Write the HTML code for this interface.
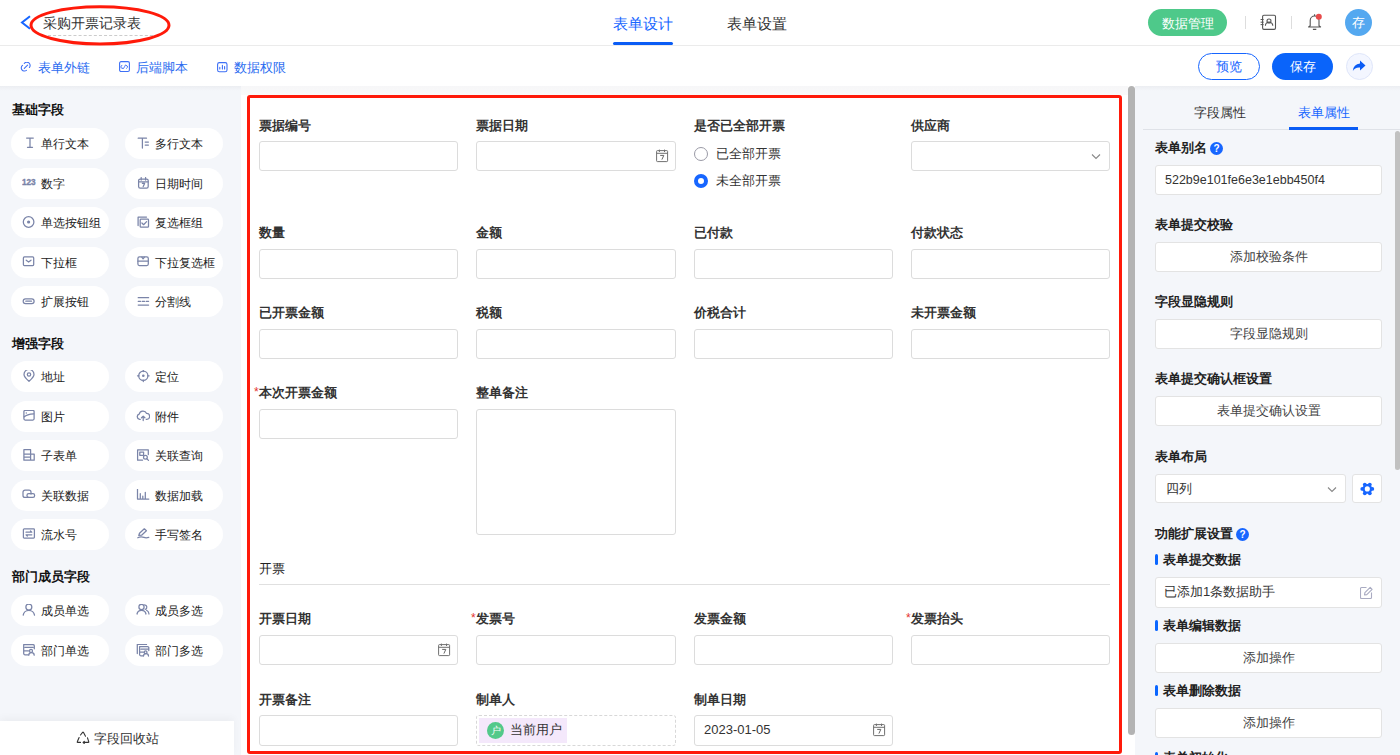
<!DOCTYPE html>
<html><head><meta charset="utf-8">
<style>
*{box-sizing:border-box;margin:0;padding:0}
html,body{width:1400px;height:755px;overflow:hidden;background:#fff;font-family:"Liberation Sans",sans-serif;color:#333}
.abs{position:absolute}
#hdr{position:absolute;left:0;top:0;width:1400px;height:46px;background:#fff;border-bottom:1px solid #ebebeb}
#tb{position:absolute;left:0;top:46px;width:1400px;height:40px;background:#fff}
#left{position:absolute;left:0;top:86px;width:241px;height:669px;background:linear-gradient(#eceef2 0,#f4f6fa 5px)}
#canvas{position:absolute;left:241px;top:86px;width:887px;height:669px;background:#fff}
#right{position:absolute;left:1135px;top:86px;width:265px;height:669px;background:linear-gradient(#eceef2 0,#f4f6fa 5px)}
.sec{position:absolute;left:12px;font-size:13px;font-weight:bold;color:#111}
.pill{position:absolute;width:98px;height:31px;background:#fff;border-radius:16px;font-size:12px;color:#222;line-height:31px}
.pill .ic{position:absolute}
.pill span{position:absolute;left:30px;top:1px}
.lbl{position:absolute;font-size:13px;font-weight:bold;color:#333}
.inp{position:absolute;width:199px;height:30px;border:1px solid #dcdcdc;border-radius:3px;background:#fff}
.rl{position:absolute;left:20px;font-size:13px;font-weight:bold;color:#222}
.rbtn{position:absolute;left:20px;width:227px;height:30px;background:#fff;border:1px solid #e3e3e3;border-radius:3px;font-size:13px;color:#444;text-align:center;line-height:28px}
</style></head><body>
<div id="hdr">
  <svg class="abs" style="left:20px;top:14px" width="12" height="16" viewBox="0 0 12 16"><path d="M10 2.3 L2 8.5 L10 14.7" fill="none" stroke="#1766ff" stroke-width="2"/></svg>
  <div class="abs" style="left:43px;top:14px;font-size:14.3px;color:#333">采购开票记录表</div>
  <div class="abs" style="left:48px;top:35px;width:110px;border-top:1px dashed #ccc"></div>
  <svg class="abs" style="left:29px;top:4px" width="142" height="44"><ellipse cx="71" cy="21.3" rx="69" ry="18.6" fill="none" stroke="#ff1a0a" stroke-width="3"/></svg>
  <div class="abs" style="left:613px;top:15px;font-size:15px;color:#1766ff">表单设计</div>
  <div class="abs" style="left:613px;top:42px;width:60px;height:3px;background:#0a5cf5;border-radius:2px"></div>
  <div class="abs" style="left:727px;top:15px;font-size:15px;color:#333">表单设置</div>
  <div class="abs" style="left:1148px;top:9px;width:79px;height:27px;border-radius:14px;background:#4ec98a;color:#fff;font-size:13px;text-align:center;line-height:29px">数据管理</div>
  <div class="abs" style="left:1245px;top:16px;width:1px;height:13px;background:#ddd"></div>
  <div class="abs" style="left:1291px;top:16px;width:1px;height:13px;background:#ddd"></div>
  <svg class="abs" style="left:1260px;top:14px" width="17" height="17" viewBox="0 0 17 17"><rect x="2.6" y="1.3" width="12.9" height="14.1" rx="1.3" fill="none" stroke="#555" stroke-width="1.1"/><path d="M0.6 5.5H3.6M0.6 8.2H3.6M0.6 10.6H3.6" stroke="#555" stroke-width="1"/><circle cx="9" cy="7" r="2" fill="none" stroke="#555" stroke-width="1.1"/><path d="M5.4 11.8A3.7 3.7 0 0 1 12.8 11.8" fill="none" stroke="#555" stroke-width="1.1"/></svg>
  <svg class="abs" style="left:1306px;top:12px" width="18" height="20" viewBox="0 0 18 20"><path d="M2.6 15L4.2 13.8V8.4A4.4 4.4 0 0 1 13 8.4V13.8L14.6 15Z" fill="none" stroke="#555" stroke-width="1.1" stroke-linejoin="round"/><path d="M8.6 2.3V4M6.9 17.4H10.3" stroke="#555" stroke-width="1.1"/><circle cx="12.8" cy="4.8" r="3" fill="#e84b4b"/></svg>
  <div class="abs" style="left:1345px;top:9px;width:27px;height:27px;border-radius:50%;background:#54a8f0;color:#fff;font-size:13px;text-align:center;line-height:27px">存</div>
</div>
<div id="tb">
  <svg class="abs" style="left:20px;top:16px" width="12" height="12" viewBox="0 0 12 12"><path d="M4.3 1.4A3 3 0 1 1 9.4 5.5M2.5 3.4A3 3 0 1 0 6.4 8.4M4.3 6.3L7.6 3.2" fill="none" stroke="#3d6ff5" stroke-width="1.1" stroke-linecap="round"/></svg>
  <div class="abs" style="left:38px;top:12.5px;font-size:13px;color:#2b6cf0">表单外链</div>
  <svg class="abs" style="left:119px;top:15px" width="12" height="12" viewBox="0 0 12 12"><rect x="0.6" y="0.6" width="9.8" height="9.9" rx="1.5" fill="none" stroke="#3d6ff5" stroke-width="1.1"/><path d="M2.9 4.3L1.7 6L2.9 7.4M3.2 7.4Q4.8 8.6 5.6 5.6Q6.4 2.8 7.3 4.3M7.5 4.4L8.8 6L7.5 7.3" fill="none" stroke="#3d6ff5" stroke-width="0.95" stroke-linecap="round" stroke-linejoin="round"/></svg>
  <div class="abs" style="left:136px;top:12.5px;font-size:13px;color:#2b6cf0">后端脚本</div>
  <svg class="abs" style="left:217px;top:16px" width="12" height="12" viewBox="0 0 12 12"><rect x="0.6" y="0.6" width="9.4" height="9.2" rx="1.8" fill="none" stroke="#3d6ff5" stroke-width="1.1"/><path d="M2.8 5.4V7M5.4 3.4V7M7.6 4.6V7" stroke="#3d6ff5" stroke-width="1.1" stroke-linecap="round"/></svg>
  <div class="abs" style="left:234px;top:12.5px;font-size:13px;color:#2b6cf0">数据权限</div>
  <div class="abs" style="left:1198px;top:7px;width:62px;height:27px;border-radius:14px;border:1px solid #1766ff;color:#1766ff;font-size:13px;text-align:center;line-height:26px;background:#fff">预览</div>
  <div class="abs" style="left:1272px;top:7px;width:61px;height:27px;border-radius:14px;background:#0a64fa;color:#fff;font-size:13px;text-align:center;line-height:28px">保存</div>
  <div class="abs" style="left:1346px;top:7px;width:27px;height:27px;border-radius:50%;background:#f3f6ff;border:1px solid #dfe6fa"></div>
  <svg class="abs" style="left:1352px;top:14px" width="14" height="12" viewBox="0 0 14 12"><path d="M8 0.5 L13.5 5.5 L8 10.5 V7.5 Q3 7 0.8 11 Q1.5 4 8 3.5 Z" fill="#0a5cf5"/></svg>
</div>
<div id="left">
<div class="sec" style="top:15px">基础字段</div>
<div class="pill" style="left:11px;top:41.8px"><svg class="ic" style="left:11px;top:9px" width="14" height="13" viewBox="0 0 14 13"><path d="M4.6 1H11.3M8 1V10.3M5.5 10.3H10.5" stroke="#7a84a8" stroke-width="1.25" fill="none" stroke-linecap="round" stroke-linejoin="round"/></svg><span>单行文本</span></div>
<div class="pill" style="left:125px;top:41.8px"><svg class="ic" style="left:11px;top:9px" width="14" height="13" viewBox="0 0 14 13"><path d="M2.2 1.2H10.5M6.4 1.2V11M9.2 5H12.4M9.2 8H12.4" stroke="#7a84a8" stroke-width="1.25" fill="none" stroke-linecap="round" stroke-linejoin="round"/></svg><span>多行文本</span></div>
<div class="pill" style="left:11px;top:81.6px"><svg class="ic" style="left:11px;top:9px" width="14" height="13" viewBox="0 0 14 13"><text x="0" y="8.3" font-size="8.2" font-weight="bold" fill="#7a84a8" stroke="#7a84a8" stroke-width="0.35" font-family="Liberation Sans">123</text></svg><span>数字</span></div>
<div class="pill" style="left:125px;top:81.6px"><svg class="ic" style="left:11px;top:9px" width="14" height="13" viewBox="0 0 14 13"><rect x="2.6" y="2" width="9.6" height="9" rx="1.6" stroke="#7a84a8" stroke-width="1.25" fill="none" stroke-linecap="round" stroke-linejoin="round"/><path d="M2.6 4.8H12.2M5.2 0.6V3M9.6 0.6V3M6.4 6.4H8.6L7.2 9.6" stroke="#7a84a8" stroke-width="1.25" fill="none" stroke-linecap="round" stroke-linejoin="round" stroke-width="1"/></svg><span>日期时间</span></div>
<div class="pill" style="left:11px;top:121.0px"><svg class="ic" style="left:11px;top:9px" width="14" height="13" viewBox="0 0 14 13"><circle cx="6.6" cy="6" r="5.3" stroke="#7a84a8" stroke-width="1.25" fill="none" stroke-linecap="round" stroke-linejoin="round"/><circle cx="6.6" cy="6" r="1.6" fill="#7a84a8"/></svg><span>单选按钮组</span></div>
<div class="pill" style="left:125px;top:121.0px"><svg class="ic" style="left:11px;top:9px" width="14" height="13" viewBox="0 0 14 13"><path d="M2.1 9.5V1H10.5" stroke="#7a84a8" stroke-width="1.25" fill="none" stroke-linecap="round" stroke-linejoin="round"/><rect x="4.2" y="3.2" width="8.3" height="8" rx="0.8" stroke="#7a84a8" stroke-width="1.25" fill="none" stroke-linecap="round" stroke-linejoin="round"/><path d="M5.9 7L7.6 8.7L10.6 5.6" stroke="#7a84a8" stroke-width="1.25" fill="none" stroke-linecap="round" stroke-linejoin="round"/></svg><span>复选框组</span></div>
<div class="pill" style="left:11px;top:160.7px"><svg class="ic" style="left:11px;top:9px" width="14" height="13" viewBox="0 0 14 13"><rect x="1.4" y="0.9" width="10.3" height="8.6" rx="1" stroke="#7a84a8" stroke-width="1.25" fill="none" stroke-linecap="round" stroke-linejoin="round"/><path d="M4.2 4.2L6.6 6L9 4.2" stroke="#7a84a8" stroke-width="1.25" fill="none" stroke-linecap="round" stroke-linejoin="round"/></svg><span>下拉框</span></div>
<div class="pill" style="left:125px;top:160.7px"><svg class="ic" style="left:11px;top:9px" width="14" height="13" viewBox="0 0 14 13"><rect x="1.9" y="0.9" width="10.4" height="8.6" rx="1.5" stroke="#7a84a8" stroke-width="1.25" fill="none" stroke-linecap="round" stroke-linejoin="round"/><path d="M1.9 5.2H12.3M5.8 1.2L7.1 2.8L8.4 1.2" stroke="#7a84a8" stroke-width="1.25" fill="none" stroke-linecap="round" stroke-linejoin="round"/></svg><span>下拉复选框</span></div>
<div class="pill" style="left:11px;top:200.3px"><svg class="ic" style="left:11px;top:9px" width="14" height="13" viewBox="0 0 14 13"><rect x="1.2" y="3.9" width="10.9" height="4.6" rx="2.3" stroke="#7a84a8" stroke-width="1.25" fill="none" stroke-linecap="round" stroke-linejoin="round"/><path d="M3.8 6.2H9.5" stroke="#7a84a8" stroke-width="1.25" fill="none" stroke-linecap="round" stroke-linejoin="round"/></svg><span>扩展按钮</span></div>
<div class="pill" style="left:125px;top:200.3px"><svg class="ic" style="left:11px;top:9px" width="14" height="13" viewBox="0 0 14 13"><path d="M2.2 2.7H12.6M12.6 10H2.2" stroke="#7a84a8" stroke-width="1.25" fill="none" stroke-linecap="round" stroke-linejoin="round"/><path d="M2.2 6.35H4.6M6.2 6.35H8.6M10.2 6.35H12.6" stroke="#7a84a8" stroke-width="1.25" fill="none" stroke-linecap="round" stroke-linejoin="round"/></svg><span>分割线</span></div>
<div class="sec" style="top:249px">增强字段</div>
<div class="pill" style="left:11px;top:274.8px"><svg class="ic" style="left:11px;top:9px" width="14" height="13" viewBox="0 0 14 13"><path d="M7 11.3C3.2 7.8 2 6 2 4.4A5 5 0 0 1 12 4.4C12 6 10.8 7.8 7 11.3Z" stroke="#7a84a8" stroke-width="1.25" fill="none" stroke-linecap="round" stroke-linejoin="round"/><circle cx="7" cy="4.5" r="1.7" stroke="#7a84a8" stroke-width="1.25" fill="none" stroke-linecap="round" stroke-linejoin="round"/></svg><span>地址</span></div>
<div class="pill" style="left:125px;top:274.8px"><svg class="ic" style="left:11px;top:9px" width="14" height="13" viewBox="0 0 14 13"><circle cx="7.3" cy="5.8" r="4.6" stroke="#7a84a8" stroke-width="1.25" fill="none" stroke-linecap="round" stroke-linejoin="round"/><circle cx="7.3" cy="5.8" r="1.3" fill="#7a84a8"/><path d="M7.3 0V1.5M7.3 10.1V11.6M1.5 5.8H3M11.6 5.8H13.1" stroke="#7a84a8" stroke-width="1.25" fill="none" stroke-linecap="round" stroke-linejoin="round"/></svg><span>定位</span></div>
<div class="pill" style="left:11px;top:314.6px"><svg class="ic" style="left:11px;top:9px" width="14" height="13" viewBox="0 0 14 13"><rect x="1.9" y="0.4" width="10.2" height="9.6" rx="1.2" stroke="#7a84a8" stroke-width="1.25" fill="none" stroke-linecap="round" stroke-linejoin="round"/><path d="M2.2 6.8C4.5 4.5 8 4 11.8 3.8" stroke="#7a84a8" stroke-width="1.25" fill="none" stroke-linecap="round" stroke-linejoin="round"/><circle cx="4.3" cy="3" r="0.7" fill="#7a84a8"/></svg><span>图片</span></div>
<div class="pill" style="left:125px;top:314.6px"><svg class="ic" style="left:11px;top:9px" width="14" height="13" viewBox="0 0 14 13"><path d="M4.3 9.3H3.6A2.6 2.6 0 0 1 3.2 4.2A3.9 3.9 0 0 1 10.6 3.4A2.9 2.9 0 0 1 10.8 9.3H10.2" stroke="#7a84a8" stroke-width="1.25" fill="none" stroke-linecap="round" stroke-linejoin="round"/><path d="M7.2 10.6V6.2M5.5 7.8L7.2 6.1L8.9 7.8" stroke="#7a84a8" stroke-width="1.25" fill="none" stroke-linecap="round" stroke-linejoin="round"/></svg><span>附件</span></div>
<div class="pill" style="left:11px;top:354.3px"><svg class="ic" style="left:11px;top:9px" width="14" height="13" viewBox="0 0 14 13"><path d="M8.6 5V0.7H1.9V11.2H12.2V5H1.9M8.6 5V11.2M1.9 8.1H8.6" stroke="#7a84a8" stroke-width="1.25" fill="none" stroke-linecap="round" stroke-linejoin="round"/></svg><span>子表单</span></div>
<div class="pill" style="left:125px;top:354.3px"><svg class="ic" style="left:11px;top:9px" width="14" height="13" viewBox="0 0 14 13"><path d="M12.3 5.5V0.8H1.6V11.2H6.5" stroke="#7a84a8" stroke-width="1.25" fill="none" stroke-linecap="round" stroke-linejoin="round"/><rect x="3.8" y="3" width="3.8" height="3.3" stroke="#7a84a8" stroke-width="1.25" fill="none" stroke-linecap="round" stroke-linejoin="round" stroke-width="1"/><circle cx="9.4" cy="8.3" r="1.9" stroke="#7a84a8" stroke-width="1.25" fill="none" stroke-linecap="round" stroke-linejoin="round"/><path d="M10.8 9.8L12.5 11.4" stroke="#7a84a8" stroke-width="1.25" fill="none" stroke-linecap="round" stroke-linejoin="round"/></svg><span>关联查询</span></div>
<div class="pill" style="left:11px;top:393.8px"><svg class="ic" style="left:11px;top:9px" width="14" height="13" viewBox="0 0 14 13"><path d="M6.5 8.4H3A2 2 0 0 1 1 6.4V3.2A2 2 0 0 1 3 1.2H7A2 2 0 0 1 9 3.2V5" stroke="#7a84a8" stroke-width="1.25" fill="none" stroke-linecap="round" stroke-linejoin="round"/><rect x="5" y="4.6" width="7.6" height="3.8" rx="1.6" stroke="#7a84a8" stroke-width="1.25" fill="none" stroke-linecap="round" stroke-linejoin="round"/></svg><span>关联数据</span></div>
<div class="pill" style="left:125px;top:393.8px"><svg class="ic" style="left:11px;top:9px" width="14" height="13" viewBox="0 0 14 13"><path d="M1.5 0V10H12.8M4.3 4.5V10M6.8 7V10M9.3 3.3V10" stroke="#7a84a8" stroke-width="1.25" fill="none" stroke-linecap="round" stroke-linejoin="round"/></svg><span>数据加载</span></div>
<div class="pill" style="left:11px;top:433.3px"><svg class="ic" style="left:11px;top:9px" width="14" height="13" viewBox="0 0 14 13"><rect x="1.4" y="0.9" width="11" height="9.2" rx="0.8" stroke="#7a84a8" stroke-width="1.25" fill="none" stroke-linecap="round" stroke-linejoin="round"/><path d="M4 4.2H9.8L8.5 3M9.8 6.8H4L5.3 8" stroke="#7a84a8" stroke-width="1.25" fill="none" stroke-linecap="round" stroke-linejoin="round" stroke-width="1"/></svg><span>流水号</span></div>
<div class="pill" style="left:125px;top:433.3px"><svg class="ic" style="left:11px;top:9px" width="14" height="13" viewBox="0 0 14 13"><path d="M2.8 7.5L3.5 5.2L8.3 0.8L10.4 2.8L5.6 7.2Z" stroke="#7a84a8" stroke-width="1.25" fill="none" stroke-linecap="round" stroke-linejoin="round"/><path d="M1.8 9.8C4 8.5 6 8.8 8 9.4C9.5 9.9 11 9.9 12.8 9.3" stroke="#7a84a8" stroke-width="1.25" fill="none" stroke-linecap="round" stroke-linejoin="round"/></svg><span>手写签名</span></div>
<div class="sec" style="top:482px">部门成员字段</div>
<div class="pill" style="left:11px;top:509.0px"><svg class="ic" style="left:11px;top:9px" width="14" height="13" viewBox="0 0 14 13"><circle cx="6.85" cy="3.1" r="3" stroke="#7a84a8" stroke-width="1.25" fill="none" stroke-linecap="round" stroke-linejoin="round"/><path d="M1.2 11.2A5.7 5.7 0 0 1 12.5 11.2" stroke="#7a84a8" stroke-width="1.25" fill="none" stroke-linecap="round" stroke-linejoin="round"/></svg><span>成员单选</span></div>
<div class="pill" style="left:125px;top:509.0px"><svg class="ic" style="left:11px;top:9px" width="14" height="13" viewBox="0 0 14 13"><circle cx="5.5" cy="2.9" r="2.6" stroke="#7a84a8" stroke-width="1.25" fill="none" stroke-linecap="round" stroke-linejoin="round"/><path d="M1 10A4.6 4.6 0 0 1 10 10M8.6 0.8A2.3 2.3 0 0 1 9.2 5.3M10.6 6.3A4.5 4.5 0 0 1 13 10" stroke="#7a84a8" stroke-width="1.25" fill="none" stroke-linecap="round" stroke-linejoin="round"/></svg><span>成员多选</span></div>
<div class="pill" style="left:11px;top:548.5px"><svg class="ic" style="left:11px;top:9px" width="14" height="13" viewBox="0 0 14 13"><path d="M6.4 10.8H3A1.3 1.3 0 0 1 1.7 9.5V0.6H11A1.3 1.3 0 0 1 12.3 1.9V4.8M3 3.4H11M2 6.9H6.5" stroke="#7a84a8" stroke-width="1.25" fill="none" stroke-linecap="round" stroke-linejoin="round"/><circle cx="9" cy="6.9" r="1.5" stroke="#7a84a8" stroke-width="1.25" fill="none" stroke-linecap="round" stroke-linejoin="round"/><path d="M6.8 11.2A2.6 2.6 0 0 1 12.2 11.2" stroke="#7a84a8" stroke-width="1.25" fill="none" stroke-linecap="round" stroke-linejoin="round"/></svg><span>部门单选</span></div>
<div class="pill" style="left:125px;top:548.5px"><svg class="ic" style="left:11px;top:9px" width="14" height="13" viewBox="0 0 14 13"><path d="M1.3 9.5V0.4H10.5" stroke="#7a84a8" stroke-width="1.25" fill="none" stroke-linecap="round" stroke-linejoin="round"/><path d="M7 11.8H4.8A1.2 1.2 0 0 1 3.6 10.6V2.6H11.6A1.2 1.2 0 0 1 12.8 3.8V6.5M5 5.2H12M4.5 8.2H7.5" stroke="#7a84a8" stroke-width="1.25" fill="none" stroke-linecap="round" stroke-linejoin="round"/><circle cx="9.6" cy="8.3" r="1.4" stroke="#7a84a8" stroke-width="1.25" fill="none" stroke-linecap="round" stroke-linejoin="round"/><path d="M7.5 12A2.4 2.4 0 0 1 12.5 12" stroke="#7a84a8" stroke-width="1.25" fill="none" stroke-linecap="round" stroke-linejoin="round"/></svg><span>部门多选</span></div>
<div class="abs" style="left:0;top:635px;width:234px;height:34px;background:#fff;box-shadow:0 -3px 8px rgba(0,0,0,0.04)"><svg class="abs" style="left:76px;top:10px" width="14" height="14" viewBox="0 0 14 14"><path d="M4.5 4L6.6 1.3Q7 0.8 7.4 1.3L9.5 5.3M11.5 6.8L12.8 10.8Q13 11.4 12.4 11.4H7.2M8.3 10.3L7.1 11.4L8.3 12.5M4.5 11.4H1.6Q1 11.4 1.3 10.8L3.1 6.5" stroke="#333" stroke-width="1.1" fill="none" stroke-linecap="round" stroke-linejoin="round"/></svg><div class="abs" style="left:94px;top:9px;font-size:13px;color:#333">字段回收站</div></div>
</div>
<div id="canvas"><div class="abs" style="left:0;top:0;width:887px;height:9px;background:linear-gradient(#f6f6f8,#fafafa)"></div></div>
<div class="lbl" style="left:259px;top:117px">票据编号</div>
<div class="inp" style="left:259px;top:141px;height:30px"></div>
<div class="lbl" style="left:476px;top:117px">票据日期</div>
<div class="inp" style="left:476px;top:141px;height:30px;width:200px"><svg class="abs" style="right:6px;top:7px" width="14" height="14" viewBox="0 0 14 14"><rect x="1.6" y="1.6" width="11" height="11" rx="0.8" stroke="#707070" stroke-width="1" fill="none"/><path d="M1.6 4.3H12.6M4.4 0.6V3M9.5 0.6V3" stroke="#707070" stroke-width="1"/><path d="M5.2 6.4H8.8L6.9 10.6" stroke="#666" stroke-width="1" fill="none"/></svg></div>
<div class="lbl" style="left:694px;top:117px">是否已全部开票</div>
<div class="abs" style="left:694px;top:147px;width:14px;height:14px;border-radius:50%;border:1px solid #9a9aa6;background:#fff"></div>
<div class="abs" style="left:716px;top:145px;font-size:13px;color:#333">已全部开票</div>
<div class="abs" style="left:694px;top:174px;width:14px;height:14px;border-radius:50%;border:4px solid #1766ff;background:#fff"></div>
<div class="abs" style="left:716px;top:172px;font-size:13px;color:#333">未全部开票</div>
<div class="lbl" style="left:911px;top:117px">供应商</div>
<div class="inp" style="left:911px;top:141px;height:30px"><svg class="abs" style="right:8px;top:11px" width="10" height="7" viewBox="0 0 10 7"><path d="M1 1.5l4 4 4-4" stroke="#888" stroke-width="1.1" fill="none"/></svg></div>
<div class="lbl" style="left:259px;top:224px">数量</div>
<div class="inp" style="left:259px;top:249px;height:30px"></div>
<div class="lbl" style="left:476px;top:224px">金额</div>
<div class="inp" style="left:476px;top:249px;height:30px;width:200px"></div>
<div class="lbl" style="left:694px;top:224px">已付款</div>
<div class="inp" style="left:694px;top:249px;height:30px"></div>
<div class="lbl" style="left:911px;top:224px">付款状态</div>
<div class="inp" style="left:911px;top:249px;height:30px"></div>
<div class="lbl" style="left:259px;top:304px">已开票金额</div>
<div class="inp" style="left:259px;top:329px;height:30px"></div>
<div class="lbl" style="left:476px;top:304px">税额</div>
<div class="inp" style="left:476px;top:329px;height:30px;width:200px"></div>
<div class="lbl" style="left:694px;top:304px">价税合计</div>
<div class="inp" style="left:694px;top:329px;height:30px"></div>
<div class="lbl" style="left:911px;top:304px">未开票金额</div>
<div class="inp" style="left:911px;top:329px;height:30px"></div>
<div class="lbl" style="left:259px;top:384px">本次开票金额</div><div class="abs" style="left:254px;top:385px;font-size:12px;color:#e5322d">*</div>
<div class="inp" style="left:259px;top:409px;height:30px"></div>
<div class="lbl" style="left:476px;top:384px">整单备注</div>
<div class="inp" style="left:476px;top:409px;height:126px;width:200px"></div>
<div class="abs" style="left:259px;top:560px;font-size:13px;color:#222;font-weight:500">开票</div>
<div class="abs" style="left:259px;top:584px;width:851px;height:1px;background:#e0e0e0"></div>
<div class="lbl" style="left:259px;top:610px">开票日期</div>
<div class="inp" style="left:259px;top:635px;height:30px"><svg class="abs" style="right:6px;top:7px" width="14" height="14" viewBox="0 0 14 14"><rect x="1.6" y="1.6" width="11" height="11" rx="0.8" stroke="#707070" stroke-width="1" fill="none"/><path d="M1.6 4.3H12.6M4.4 0.6V3M9.5 0.6V3" stroke="#707070" stroke-width="1"/><path d="M5.2 6.4H8.8L6.9 10.6" stroke="#666" stroke-width="1" fill="none"/></svg></div>
<div class="lbl" style="left:476px;top:610px">发票号</div><div class="abs" style="left:471px;top:611px;font-size:12px;color:#e5322d">*</div>
<div class="inp" style="left:476px;top:635px;height:30px;width:200px"></div>
<div class="lbl" style="left:694px;top:610px">发票金额</div>
<div class="inp" style="left:694px;top:635px;height:30px"></div>
<div class="lbl" style="left:911px;top:610px">发票抬头</div><div class="abs" style="left:906px;top:611px;font-size:12px;color:#e5322d">*</div>
<div class="inp" style="left:911px;top:635px;height:30px"></div>
<div class="lbl" style="left:259px;top:691px">开票备注</div>
<div class="inp" style="left:259px;top:715px;height:31px"></div>
<div class="lbl" style="left:476px;top:691px">制单人</div>
<div class="abs" style="left:476px;top:715px;width:200px;height:31px;border:1px dashed #d8d8d8;border-radius:3px;background:#fff"><div class="abs" style="left:2px;top:2px;width:88px;height:25px;background:#f4e8fb"></div><div class="abs" style="left:10px;top:6px;width:17px;height:17px;border-radius:50%;background:#52c98a;color:#fff;font-size:10px;text-align:center;line-height:17px">户</div><div class="abs" style="left:33px;top:5px;font-size:13px;color:#333">当前用户</div></div>
<div class="lbl" style="left:694px;top:691px">制单日期</div>
<div class="inp" style="left:694px;top:715px;height:31px"><div class="abs" style="left:9px;top:6px;font-size:13px;color:#333">2023-01-05</div><svg class="abs" style="right:6px;top:7px" width="14" height="14" viewBox="0 0 14 14"><rect x="1.6" y="1.6" width="11" height="11" rx="0.8" stroke="#707070" stroke-width="1" fill="none"/><path d="M1.6 4.3H12.6M4.4 0.6V3M9.5 0.6V3" stroke="#707070" stroke-width="1"/><path d="M5.2 6.4H8.8L6.9 10.6" stroke="#666" stroke-width="1" fill="none"/></svg></div>
<div class="abs" style="left:247px;top:95px;width:875px;height:659px;border:3px solid #ff1a0a;border-radius:3px"></div>
<div class="abs" style="left:1128px;top:86px;width:7px;height:649px;background:#b3b3b3;border-radius:4px"></div>
<div id="right"></div>
<div class="abs" style="left:1194px;top:104px;font-size:13px;color:#333">字段属性</div>
<div class="abs" style="left:1298px;top:104px;font-size:13px;color:#1766ff">表单属性</div>
<div class="abs" style="left:1143px;top:129px;width:257px;height:1px;background:#dfe2e8"></div>
<div class="abs" style="left:1289px;top:127px;width:69px;height:3px;background:#0a5cf5"></div>
<div class="abs" style="left:1395px;top:131px;width:5px;height:339px;background:#c1c1c1;border-radius:3px"></div>
<div class="rl" style="left:1155px;top:139px">表单别名</div><div class="abs" style="left:1210px;top:142px;width:13px;height:13px;border-radius:50%;background:#1766ff;color:#fff;font-size:10px;font-weight:bold;text-align:center;line-height:13px">?</div>
<div class="rbtn" style="left:1155px;top:165px;height:30px;text-align:left;padding-left:9px;color:#333;font-size:12.5px">522b9e101fe6e3e1ebb450f4</div>
<div class="rl" style="left:1155px;top:216px">表单提交校验</div>
<div class="rbtn" style="left:1155px;top:242px;width:227px;height:30px">添加校验条件</div>
<div class="rl" style="left:1155px;top:293px">字段显隐规则</div>
<div class="rbtn" style="left:1155px;top:319px;width:227px;height:30px">字段显隐规则</div>
<div class="rl" style="left:1155px;top:370px">表单提交确认框设置</div>
<div class="rbtn" style="left:1155px;top:396px;width:227px;height:30px">表单提交确认设置</div>
<div class="rl" style="left:1155px;top:448px">表单布局</div>
<div class="rbtn" style="left:1155px;top:474px;width:191px;height:29px;text-align:left;padding-left:10px;color:#333">四列<svg class="abs" style="right:8px;top:11px" width="10" height="7" viewBox="0 0 10 7"><path d="M1 1.5l4 4 4-4" stroke="#888" stroke-width="1.1" fill="none"/></svg></div>
<div class="rbtn" style="left:1352px;top:474px;width:30px;height:29px"><svg class="abs" style="left:0;top:0" width="28" height="27" viewBox="0 0 28 27"><g transform="translate(14.3 13.9)"><circle r="4.9" fill="#1766ff"/><circle cx="5.00" cy="0.00" r="1.9" fill="#1766ff"/><circle cx="2.50" cy="4.33" r="1.9" fill="#1766ff"/><circle cx="-2.50" cy="4.33" r="1.9" fill="#1766ff"/><circle cx="-5.00" cy="0.00" r="1.9" fill="#1766ff"/><circle cx="-2.50" cy="-4.33" r="1.9" fill="#1766ff"/><circle cx="2.50" cy="-4.33" r="1.9" fill="#1766ff"/><circle r="2.55" fill="#fff"/></g></svg></div>
<div class="rl" style="left:1155px;top:525px">功能扩展设置</div><div class="abs" style="left:1236px;top:528px;width:13px;height:13px;border-radius:50%;background:#1766ff;color:#fff;font-size:10px;font-weight:bold;text-align:center;line-height:13px">?</div>
<div class="abs" style="left:1155px;top:553.5px;width:3px;height:11px;background:#0a66ff;border-radius:1.5px"></div><div class="rl" style="left:1163px;top:551px">表单提交数据</div>
<div class="rbtn" style="left:1155px;top:577px;height:31px;text-align:left;padding-left:8px;color:#333">已添加1条数据助手<svg class="abs" style="right:8px;top:8px" width="13" height="13" viewBox="0 0 13 13"><path d="M11.5 6.5V11.5A1 1 0 0 1 10.5 12.5H1.5A1 1 0 0 1 .5 11.5V2.5A1 1 0 0 1 1.5 1.5H6.5" stroke="#a9abc2" stroke-width="1.1" fill="none"/><path d="M4.5 9l.4-2.3 5.3-5.3 1.9 1.9-5.3 5.3z" stroke="#a9abc2" stroke-width="1.1" fill="none" stroke-linejoin="round"/></svg></div>
<div class="abs" style="left:1155px;top:619.5px;width:3px;height:11px;background:#0a66ff;border-radius:1.5px"></div><div class="rl" style="left:1163px;top:617px">表单编辑数据</div>
<div class="rbtn" style="left:1155px;top:643px;width:227px;height:30px">添加操作</div>
<div class="abs" style="left:1155px;top:684.5px;width:3px;height:11px;background:#0a66ff;border-radius:1.5px"></div><div class="rl" style="left:1163px;top:682px">表单删除数据</div>
<div class="rbtn" style="left:1155px;top:708px;width:227px;height:30px">添加操作</div>
<div class="abs" style="left:1155px;top:751.5px;width:3px;height:11px;background:#0a66ff;border-radius:1.5px"></div><div class="rl" style="left:1163px;top:749px">表单初始化</div>
</body></html>
